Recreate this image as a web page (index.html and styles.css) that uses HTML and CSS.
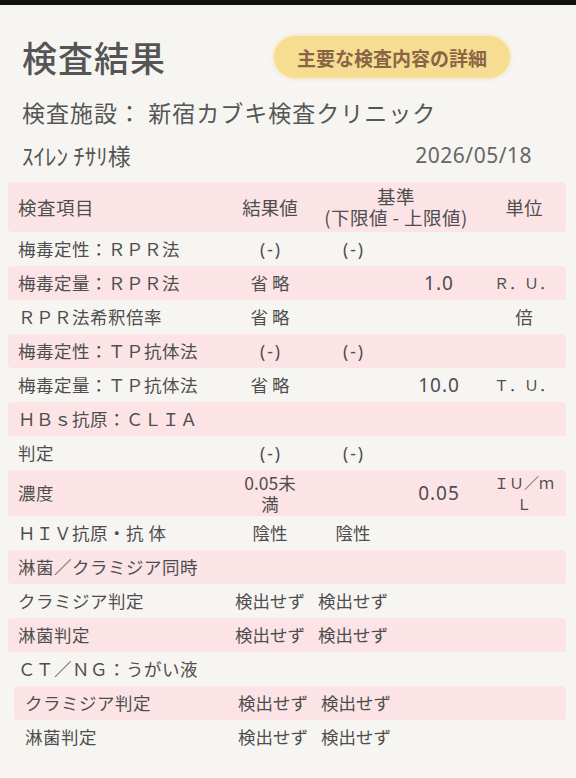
FILE: index.html
```html
<!DOCTYPE html>
<html lang="ja">
<head>
<meta charset="utf-8">
<title>検査結果</title>
<link rel="stylesheet" href="styles.css">
</head>
<body>
<div class="topbar"></div>
<main class="page">
  <div class="title-row">
    <h1 class="title">検査結果</h1>
    <button class="detail-btn">主要な検査内容の詳細</button>
  </div>
  <p class="facility">検査施設： 新宿カブキ検査クリニック</p>
  <div class="meta">
    <span class="name">ｽｲﾚﾝ ﾁｻﾘ様</span>
    <span class="date">2026/05/18</span>
  </div>

  <div class="table">
    <div class="row head pk">
      <div class="c item">検査項目</div>
      <div class="c">結果値</div>
      <div class="c span2 two">基準<br>(下限値 - 上限値)</div>
      <div class="c">単位</div>
    </div>
    <div class="row">
      <div class="c item">梅毒定性：ＲＰＲ法</div>
      <div class="c neg">(-)</div>
      <div class="c neg">(-)</div>
      <div class="c"></div>
      <div class="c"></div>
    </div>
    <div class="row pk">
      <div class="c item">梅毒定量：ＲＰＲ法</div>
      <div class="c">省 略</div>
      <div class="c"></div>
      <div class="c num">1.0</div>
      <div class="c unit">Ｒ．Ｕ．</div>
    </div>
    <div class="row">
      <div class="c item">ＲＰＲ法希釈倍率</div>
      <div class="c">省 略</div>
      <div class="c"></div>
      <div class="c"></div>
      <div class="c">倍</div>
    </div>
    <div class="row pk">
      <div class="c item">梅毒定性：ＴＰ抗体法</div>
      <div class="c neg">(-)</div>
      <div class="c neg">(-)</div>
      <div class="c"></div>
      <div class="c"></div>
    </div>
    <div class="row">
      <div class="c item">梅毒定量：ＴＰ抗体法</div>
      <div class="c">省 略</div>
      <div class="c"></div>
      <div class="c num">10.0</div>
      <div class="c unit">Ｔ．Ｕ．</div>
    </div>
    <div class="row pk">
      <div class="c item">ＨＢｓ抗原：ＣＬＩＡ</div>
      <div class="c"></div>
      <div class="c"></div>
      <div class="c"></div>
      <div class="c"></div>
    </div>
    <div class="row">
      <div class="c item">判定</div>
      <div class="c neg">(-)</div>
      <div class="c neg">(-)</div>
      <div class="c"></div>
      <div class="c"></div>
    </div>
    <div class="row tall pk">
      <div class="c item">濃度</div>
      <div class="c two">0.05未<br>満</div>
      <div class="c"></div>
      <div class="c num">0.05</div>
      <div class="c unit two">ＩＵ／ｍ<br>Ｌ</div>
    </div>
    <div class="row">
      <div class="c item">ＨＩＶ抗原・抗 体</div>
      <div class="c">陰性</div>
      <div class="c">陰性</div>
      <div class="c"></div>
      <div class="c"></div>
    </div>
    <div class="row pk">
      <div class="c item">淋菌／クラミジア同時</div>
      <div class="c"></div>
      <div class="c"></div>
      <div class="c"></div>
      <div class="c"></div>
    </div>
    <div class="row">
      <div class="c item">クラミジア判定</div>
      <div class="c">検出せず</div>
      <div class="c">検出せず</div>
      <div class="c"></div>
      <div class="c"></div>
    </div>
    <div class="row pk">
      <div class="c item">淋菌判定</div>
      <div class="c">検出せず</div>
      <div class="c">検出せず</div>
      <div class="c"></div>
      <div class="c"></div>
    </div>
    <div class="row">
      <div class="c item">ＣＴ／ＮＧ：うがい液</div>
      <div class="c"></div>
      <div class="c"></div>
      <div class="c"></div>
      <div class="c"></div>
    </div>
    <div class="row sub pk">
      <div class="c item">クラミジア判定</div>
      <div class="c">検出せず</div>
      <div class="c">検出せず</div>
      <div class="c"></div>
      <div class="c"></div>
    </div>
    <div class="row sub">
      <div class="c item">淋菌判定</div>
      <div class="c">検出せず</div>
      <div class="c">検出せず</div>
      <div class="c"></div>
      <div class="c"></div>
    </div>
  </div>
</main>
</body>
</html>
```
FILE: styles.css
```css
html, body {
  margin: 0;
  padding: 0;
  background: #f7f5f2;
}

body {
  font-family: "Noto Sans CJK JP", "Noto Sans", sans-serif;
  color: #4e4e4e;
  width: 576px;
  height: 778px;
  overflow: hidden;
}

.topbar {
  height: 5px;
  background: #111111;
}

.page {
  padding: 0;
}

.title-row {
  display: flex;
  align-items: center;
  justify-content: space-between;
  height: 44px;
  margin-top: 30px;
  padding: 0 66px 0 22px;
}

.title {
  margin: 0;
  font-size: 35px;
  font-weight: 500;
  line-height: 40px;
  color: #555555;
  letter-spacing: 1px;
}

.detail-btn {
  width: 236px;
  height: 42px;
  border: none;
  border-radius: 21px;
  background: #f6dd92;
  box-shadow: 0 0 4px rgba(240, 210, 130, 0.7);
  color: #8a6545;
  font-family: "Noto Sans CJK JP", sans-serif;
  font-size: 19px;
  font-weight: 700;
  padding: 0;
}

.facility {
  margin: 18px 0 0 22px;
  font-size: 23px;
  line-height: 30px;
  color: #555555;
  letter-spacing: 1px;
}

.meta {
  display: flex;
  justify-content: space-between;
  align-items: center;
  margin-top: 15px;
  padding: 0 44px 0 22px;
  height: 26px;
}

.name {
  font-size: 23px;
  color: #555555;
}

.date {
  font-family: "Noto Sans", sans-serif;
  font-size: 21px;
  letter-spacing: 0.5px;
  color: #666666;
}

.table {
  margin: 14px 10px 0 8px;
}

.row {
  display: grid;
  grid-template-columns: 222px 80px 86px 86px 84px;
  height: 34px;
  align-items: center;
  font-size: 17.5px;
}

.row.pk {
  background: #fce4e6;
  border-radius: 4px;
}

.row.head {
  height: 50px;
  font-size: 18.5px;
}

.row.head .c.span2 {
  letter-spacing: 0.5px;
}

.row.tall {
  height: 46px;
}

.row.sub {
  margin-left: 6px;
  grid-template-columns: 219px 80px 86px 86px 81px;
}

.c {
  text-align: center;
  line-height: 22px;
  white-space: nowrap;
}

.c.item {
  text-align: left;
  padding-left: 10px;
  letter-spacing: 0.5px;
}

.row.sub .c.item {
  padding-left: 11px;
}

.c.span2 {
  grid-column: span 2;
}

.c.neg {
  font-family: "Noto Sans", sans-serif;
  letter-spacing: 2px;
  text-indent: 2px;
}

.c.num {
  font-family: "Noto Sans", sans-serif;
  font-size: 19px;
  letter-spacing: 1px;
}

.c.unit {
  font-size: 15px;
}

.c.two {
  line-height: 21px;
}
```
